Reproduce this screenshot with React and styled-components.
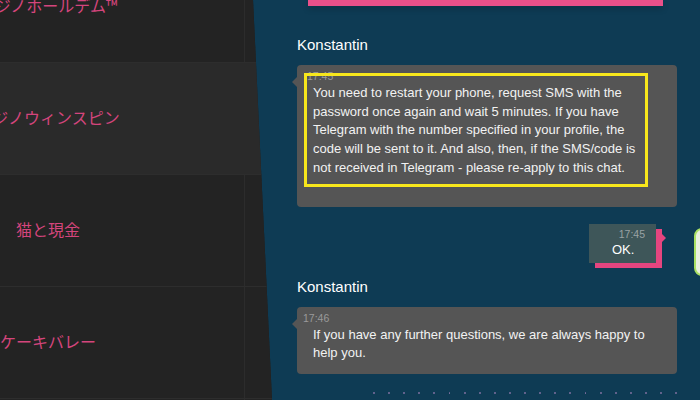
import React from "react";
import styled, { createGlobalStyle } from "styled-components";

const GlobalStyle = createGlobalStyle`
  html, body { margin: 0; padding: 0; }
  body {
    background: #0e3b54;
    overflow: hidden;
    font-family: "Liberation Sans", Arial, sans-serif;
  }
`;

const Page = styled.div`
  position: relative;
  display: flex;
  width: 700px;
  height: 400px;
  overflow: hidden;
  background: #0e3b54;
`;

const Sidebar = styled.aside`
  flex: 0 0 272px;
  height: 400px;
  overflow: hidden;
  background: #232323;
  clip-path: polygon(0 0, 253px 0, 272px 100%, 0 100%);
`;

const GameList = styled.div`
  display: flex;
  flex-direction: column;
  margin-top: -49px;
`;

const GameRow = styled.div`
  flex: 0 0 auto;
  display: flex;
  height: 111px;
  background: ${(p) => (p.$hover ? "#2a2a2a" : "#232323")};
  border-bottom: 1px solid #2d2d2d;
`;

const GameName = styled.div`
  flex: 0 0 200px;
  margin-left: -52px;
  padding-bottom: 4px;
  box-sizing: border-box;
  display: flex;
  align-items: center;
  justify-content: center;
  white-space: nowrap;
  color: #d4457c;
  font-family: "Noto Sans CJK JP", "Noto Sans", sans-serif;
  font-size: 16px;
`;

const RowFill = styled.div`
  flex: 1;
`;

const RowTail = styled.div`
  flex: 0 0 27px;
  border-left: 1px solid ${(p) => (p.$hover ? "transparent" : "#2c2c2c")};
`;

const Chat = styled.main`
  flex: 1;
  min-width: 0;
  display: flex;
  flex-direction: column;
  padding: 0 23px 0 25px;
`;

const TopButton = styled.div`
  height: 6px;
  margin: 0 14px 0 11px;
  background: #e9508a;
  box-shadow: 0 3px 6px rgba(0, 0, 0, 0.18);
`;

const Sender = styled.div`
  margin-top: ${(p) => p.$top}px;
  color: #ffffff;
  font-size: 15px;
  line-height: 17px;
`;

const Bubble = styled.div`
  position: relative;
  margin-top: 12px;
  background: #555555;
  border-radius: 4px;
  padding: 5px 30px ${(p) => p.$bottom}px 16px;

  &::before {
    content: "";
    position: absolute;
    left: -5px;
    top: 12px;
    border-top: 5px solid transparent;
    border-bottom: 5px solid transparent;
    border-right: 5px solid #555555;
  }
`;

const Stamp = styled.div`
  margin-left: ${(p) => p.$shift}px;
  color: #9a9a9a;
  font-size: 10.5px;
  line-height: 13px;
`;

const MessageText = styled.p`
  margin: 1px 0 0;
  color: #f2f2f2;
  font-size: 13px;
  line-height: 18.7px;
`;

const Highlight = styled.div`
  position: absolute;
  left: 7px;
  top: 8px;
  width: 338px;
  height: 108px;
  border: 3px solid #f8e71c;
  pointer-events: none;
`;

const OwnBubble = styled.div`
  position: relative;
  align-self: flex-end;
  margin: 17px 21px 0 0;
  width: 67px;
  box-sizing: border-box;
  padding: 4px 11px 4px 23px;
  background: #3e5659;
  box-shadow: 6px 5px 0 #e5457f;

  &::after {
    content: "";
    position: absolute;
    right: -10px;
    top: 10px;
    border-top: 4px solid transparent;
    border-bottom: 4px solid transparent;
    border-left: 4px solid #e5457f;
  }
`;

const OwnStamp = styled.div`
  text-align: right;
  color: #9aa3a5;
  font-size: 10.5px;
  line-height: 13px;
`;

const OwnText = styled.div`
  color: #ffffff;
  font-size: 13px;
  line-height: 18px;
`;

const Dots = styled.div`
  display: flex;
  gap: 13.2px;
  margin: 18px 0 0 76px;
`;

const Dot = styled.span`
  width: 2px;
  height: 2px;
  border-radius: 50%;
  background: #7d6f9f;
`;

const SideTab = styled.div`
  position: absolute;
  left: 694px;
  top: 228px;
  width: 24px;
  height: 44px;
  border: 2px solid #a9e063;
  border-radius: 8px;
  background: #e9f0df;
`;

const games = [
  { name: "カジノホールデム™" },
  { name: "カジノウィンスピン", hover: true },
  { name: "猫と現金" },
  { name: "ケーキバレー" },
  { name: "" },
];

export default function App() {
  return (
    <>
      <GlobalStyle />
      <Page>
        <Sidebar>
          <GameList>
            {games.map((g, i) => (
              <GameRow key={i} $hover={g.hover}>
                <GameName>{g.name}</GameName>
                <RowFill />
                <RowTail $hover={g.hover} />
              </GameRow>
            ))}
          </GameList>
        </Sidebar>
        <Chat>
          <TopButton />
          <Sender $top={30}>Konstantin</Sender>
          <Bubble $bottom={29}>
            <Stamp $shift={-6}>17:45</Stamp>
            <MessageText>
              You need to restart your phone, request SMS with the password once
              again and wait 5 minutes. If you have Telegram with the number
              specified in your profile, the code will be sent to it. And also,
              then, if the SMS/code is not received in Telegram - please re-apply
              to this chat.
            </MessageText>
            <Highlight />
          </Bubble>
          <OwnBubble>
            <OwnStamp>17:45</OwnStamp>
            <OwnText>OK.</OwnText>
          </OwnBubble>
          <Sender $top={15}>Konstantin</Sender>
          <Bubble $bottom={11}>
            <Stamp $shift={-10}>17:46</Stamp>
            <MessageText>
              If you have any further questions, we are always happy to help you.
            </MessageText>
          </Bubble>
          <Dots>
            {Array.from({ length: 21 }).map((_, i) => (
              <Dot key={i} />
            ))}
          </Dots>
        </Chat>
        <SideTab />
      </Page>
    </>
  );
}
